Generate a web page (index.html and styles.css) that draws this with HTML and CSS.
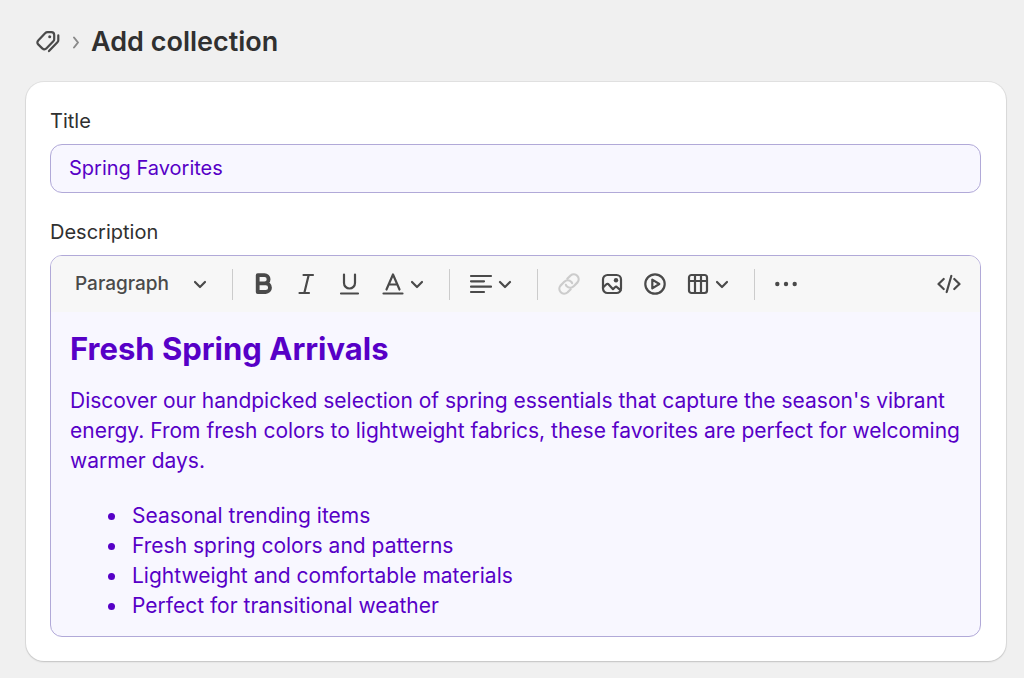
FILE: index.html
```html
<!DOCTYPE html>
<html lang="en-US">
<head>
    <meta charset="utf-8">
    <meta name="viewport" content="width=device-width, initial-scale=1">
    <title>Add collection</title>

    <link rel="stylesheet" href="styles.css">
</head>
<body>

    <svg class="sprite" aria-hidden="true">
        <symbol id="chevron" viewBox="0 0 14 14">
            <path d="M2 5l5 5 5-5"/>
        </symbol>
    </svg>

    <div class="page">

        <header class="page__header">
            <a class="page__back" href="#" aria-label="Collections">
                <svg class="icon" viewBox="0 0 24 24">
                    <path d="M11.600 2.200h3.800a2.800 2.800 0 0 1 2.800 2.800v4.200a3 3 0 0 1-.9 2.100l-7 7.300a2.600 2.600 0 0 1-3.800 0l-4.300-4.200a2.600 2.600 0 0 1 0-3.800l6.900-7.400a3.600 3.600 0 0 1 2.500-1z"/>
                    <path d="M22.300 5.400v4.800a3 3 0 0 1-.9 2.100l-8.400 8.800"/>
                    <circle class="icon__dot" cx="13.700" cy="6.700" r="1.500"/>
                </svg>
            </a>
            <svg class="page__separator" viewBox="0 0 8 14" aria-hidden="true">
                <path d="M2 2.500l4 5-4 5"/>
            </svg>
            <h1 class="page__title">Add collection</h1>
        </header>

        <main class="card">
            <label class="label" for="title">Title</label>
            <input class="input" id="title" type="text" value="Spring Favorites">

            <div class="label" id="description-label">Description</div>
            <div class="editor">
                <div class="toolbar" role="toolbar" aria-label="Formatting">
                    <div class="toolbar__format">
                        <select class="toolbar__select" aria-label="Text style">
                            <option>Paragraph</option>
                            <option>Heading 1</option>
                            <option>Heading 2</option>
                        </select>
                        <svg class="chevron" aria-hidden="true"><use href="#chevron"/></svg>
                    </div>

                    <span class="toolbar__divider"></span>

                    <button class="toolbar__button" type="button" aria-label="Bold">
                        <svg class="icon icon--bold" viewBox="0 0 24 24">
                            <path d="M5.700 3.200h6.800a4.100 4.100 0 0 1 0 8.200H5.700zM5.700 11.400h8a4.300 4.300 0 0 1 0 8.600h-8z"/>
                        </svg>
                    </button>
                    <button class="toolbar__button" type="button" aria-label="Italic">
                        <svg class="icon" viewBox="0 0 24 24">
                            <path d="M8.500 3h9.500M4.500 21h9.500M13.700 3L9.300 21"/>
                        </svg>
                    </button>
                    <button class="toolbar__button" type="button" aria-label="Underline">
                        <svg class="icon" viewBox="0 0 24 24">
                            <path d="M6 2.500v8.500a5.500 5.500 0 0 0 11 0V2.500M3 21.500h17"/>
                        </svg>
                    </button>
                    <button class="toolbar__button toolbar__button--menu" type="button" aria-label="Text color">
                        <svg class="icon" viewBox="0 0 24 24">
                            <path d="M5.500 17.500L12 2.500l6.500 15M7.800 12.500h8.400M2.500 21.500h19"/>
                        </svg>
                        <svg class="chevron" aria-hidden="true"><use href="#chevron"/></svg>
                    </button>

                    <span class="toolbar__divider"></span>

                    <button class="toolbar__button toolbar__button--menu" type="button" aria-label="Alignment">
                        <svg class="icon" viewBox="0 0 24 24">
                            <path d="M2 4h20M2 9.300h13M2 14.700h20M2 20h13"/>
                        </svg>
                        <svg class="chevron" aria-hidden="true"><use href="#chevron"/></svg>
                    </button>

                    <span class="toolbar__divider"></span>

                    <button class="toolbar__button" type="button" aria-label="Insert link" disabled>
                        <svg class="icon" viewBox="0 0 24 24">
                            <path d="M10.300 6.800l3.300-3.300a4.900 4.900 0 0 1 6.900 6.900l-3.800 3.800a4.900 4.900 0 0 1-6.900 0 4.600 4.600 0 0 1-.9-1.400"/>
                            <path d="M13.700 17.200l-3.300 3.300a4.900 4.900 0 0 1-6.900-6.900l3.800-3.800a4.900 4.900 0 0 1 6.900 0 4.600 4.600 0 0 1 .9 1.400"/>
                        </svg>
                    </button>
                    <button class="toolbar__button" type="button" aria-label="Insert image">
                        <svg class="icon" viewBox="0 0 24 24">
                            <rect x="3" y="3" width="18" height="18" rx="4.500"/>
                            <path d="M3 15.500l3.400-3.200a1.600 1.600 0 0 1 2.300.1l4.300 4.800 2-1.900a1.600 1.600 0 0 1 2.200 0l3.300 2.900"/>
                            <circle class="icon__dot" cx="16" cy="8.300" r="2.200"/>
                        </svg>
                    </button>
                    <button class="toolbar__button" type="button" aria-label="Insert video">
                        <svg class="icon" viewBox="0 0 24 24">
                            <circle cx="12" cy="12" r="9.700"/>
                            <path d="M9.300 7.600v8.800l7-4.400z"/>
                        </svg>
                    </button>
                    <button class="toolbar__button toolbar__button--menu" type="button" aria-label="Insert table">
                        <svg class="icon" viewBox="0 0 24 24">
                            <rect x="3" y="3" width="18" height="18" rx="2.500"/>
                            <path d="M3 9h18M9 3v18M15 3v18"/>
                        </svg>
                        <svg class="chevron" aria-hidden="true"><use href="#chevron"/></svg>
                    </button>

                    <span class="toolbar__divider"></span>

                    <button class="toolbar__button" type="button" aria-label="More">
                        <svg class="icon" viewBox="0 0 24 24">
                            <circle class="icon__dot" cx="3.300" cy="12" r="2.200"/>
                            <circle class="icon__dot" cx="12" cy="12" r="2.200"/>
                            <circle class="icon__dot" cx="20.700" cy="12" r="2.200"/>
                        </svg>
                    </button>
                    <button class="toolbar__button toolbar__button--end" type="button" aria-label="Show HTML">
                        <svg class="icon" viewBox="0 0 24 24">
                            <path d="M6.700 7l-5.200 5 5.200 5M17.300 7l5.200 5-5.200 5M14.300 4L9.700 20"/>
                        </svg>
                    </button>
                </div>

                <div class="editor__content" role="textbox" aria-multiline="true" aria-labelledby="description-label" contenteditable="true" spellcheck="false">
                    <h2>Fresh Spring Arrivals</h2>
                    <p>Discover our handpicked selection of spring essentials that capture the season's vibrant energy. From fresh colors to lightweight fabrics, these favorites are perfect for welcoming warmer days.</p>
                    <ul>
                        <li>Seasonal trending items</li>
                        <li>Fresh spring colors and patterns</li>
                        <li>Lightweight and comfortable materials</li>
                        <li>Perfect for transitional weather</li>
                    </ul>
                </div>
            </div>
        </main>

    </div>

</body>
</html>
```
FILE: styles.css
```css
* {
    box-sizing: border-box;
}

body {
    background-color: #f0f0f0;
    color: #303030;
    margin: 0;
    font-family: Inter, "Liberation Sans", sans-serif;
    font-size: 20px;
    line-height: 30px;
}

.sprite {
    display: none;
}

.page {
    padding: 24px 18px 16px 26px;
}

.page__header {
    display: flex;
    align-items: center;
    padding: 0 10px;
    margin-bottom: 22px;
}

.page__back {
    display: flex;
    color: #4a4a4a;
}

.page__separator {
    width: 8px;
    height: 14px;
    margin: 0 11px 0 12px;
    fill: none;
    stroke: #8a8a8a;
    stroke-width: 2;
    stroke-linecap: round;
    stroke-linejoin: round;
}

.page__title {
    margin: 0;
    font-size: 27px;
    font-weight: 600;
    line-height: 36px;
}

.card {
    padding: 24px 25px 24px 24px;
    background-color: #fff;
    border-radius: 18px;
    box-shadow: 0 0 0 1px rgba(0,0,0,0.06), 0 1px 2px rgba(0,0,0,0.14);
}

.label {
    display: block;
    margin-bottom: 8px;
}

.input {
    display: block;
    width: 100%;
    height: 49px;
    margin-bottom: 24px;
    padding: 0 18px 2px;
    color: #5700c7;
    background-color: #f8f7ff;
    border: 1px solid #b1a9d8;
    border-radius: 12px;
    font: inherit;
}

.editor {
    overflow: hidden;
    background-color: #f8f7ff;
    border: 1px solid #b1a9d8;
    border-radius: 12px;
}

.toolbar {
    display: flex;
    align-items: center;
    height: 56px;
    padding: 0 10px 0 11px;
    color: #4a4a4a;
    background-color: #f7f7f7;
}

.toolbar__format {
    display: grid;
    align-items: center;
    width: 155px;
}

.toolbar__format > * {
    grid-area: 1 / 1;
}

.toolbar__format .chevron {
    justify-self: end;
    margin-right: 10px;
    pointer-events: none;
}

.toolbar__select {
    width: 100%;
    height: 32px;
    padding: 0 32px 0 13px;
    appearance: none;
    color: inherit;
    background: none;
    border: 0;
    font: inherit;
    font-size: 19px;
    font-weight: 500;
}

.toolbar__divider {
    width: 1px;
    height: 31px;
    margin: 0 9px 0 15px;
    background-color: #ccc;
}

.toolbar__button {
    display: flex;
    align-items: center;
    justify-content: center;
    width: 43px;
    height: 32px;
    padding: 0;
    color: inherit;
    background: none;
    border: 0;
    cursor: pointer;
}

.toolbar__button:disabled {
    color: #ccc;
    cursor: default;
}

.toolbar__button--menu {
    gap: 5px;
    width: 63px;
}

.toolbar__button--end {
    margin-left: auto;
}

.icon {
    width: 24px;
    height: 24px;
    fill: none;
    stroke: currentColor;
    stroke-width: 2.2;
    stroke-linecap: round;
    stroke-linejoin: round;
}

.icon--bold {
    stroke-width: 3.8;
}

.icon__dot {
    fill: currentColor;
    stroke: none;
}

.chevron {
    width: 14px;
    height: 14px;
    fill: none;
    stroke: currentColor;
    stroke-width: 2.2;
    stroke-linecap: round;
    stroke-linejoin: round;
}

.editor__content {
    padding: 17px 12px 15px 19px;
    color: #5700c7;
    font-size: 21px;
    outline: none;
}

.editor__content h2 {
    margin: 0 0 17px;
    font-size: 31px;
    font-weight: 700;
    line-height: 40px;
}

.editor__content p {
    margin: 0 0 25px;
}

.editor__content ul {
    margin: 0;
    padding-left: 58px;
}

.editor__content li {
    padding-left: 4px;
}
```
